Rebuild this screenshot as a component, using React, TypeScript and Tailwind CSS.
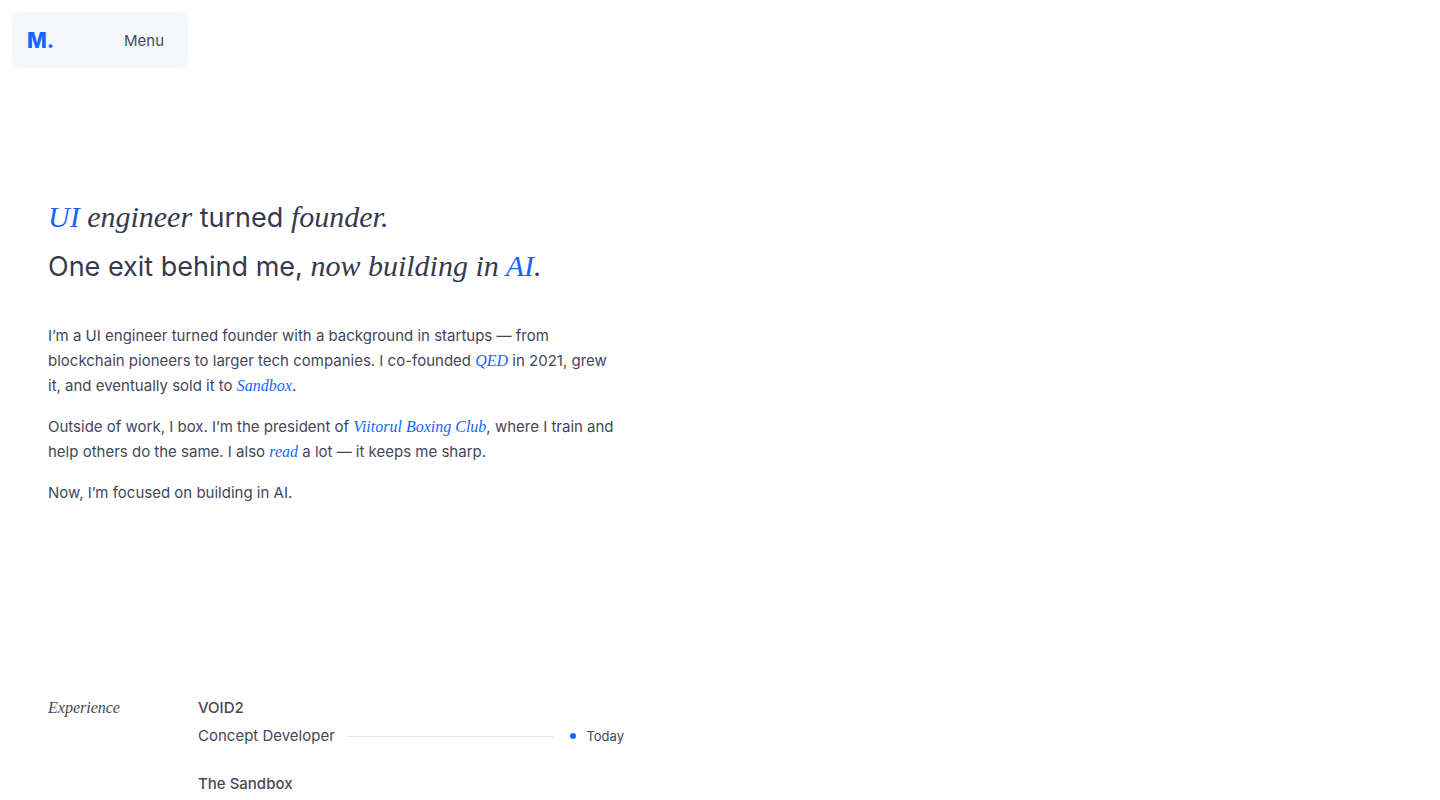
import { ReactNode } from 'react';

interface Job {
  company: string;
  role?: string;
  period?: string;
}

const jobs: Job[] = [
  { company: 'VOID2', role: 'Concept Developer', period: 'Today' },
  { company: 'The Sandbox' },
];

function Serif({ children }: { children: ReactNode }) {
  return (
    <em className="font-['Liberation_Serif',serif] text-[30px] leading-none italic">{children}</em>
  );
}

function SerifLink({ href, children }: { href: string; children: ReactNode }) {
  return (
    <a
      href={href}
      className="font-['Liberation_Serif',serif] text-base leading-none text-[#1466ff] italic hover:underline"
    >
      {children}
    </a>
  );
}

function Header() {
  return (
    <header className="p-3">
      <div className="flex h-14 w-44 items-center justify-between rounded-lg bg-[#f4f7fa] pt-px pr-3 pl-[15px]">
        <a href="/" className="text-[21px] font-extrabold text-[#1466ff]">
          M.
        </a>
        <button type="button" className="px-3 py-2">
          Menu
        </button>
      </div>
    </header>
  );
}

function JobItem({ job }: { job: Job }) {
  return (
    <li>
      <h3 className="font-medium">{job.company}</h3>
      {job.role && (
        <div className="mt-1 flex items-center">
          <p>{job.role}</p>
          <span className="mr-4 ml-3 h-px flex-1 bg-[#e8e8ea]" />
          <span className="mr-2.5 size-1.5 rounded-full bg-[#1466ff]" />
          <span className="text-[13px]">{job.period}</span>
        </div>
      )}
    </li>
  );
}

export default function App() {
  return (
    <div className="min-h-screen bg-white font-[Inter,sans-serif] text-[15px] leading-6 text-[#44475a]">
      <Header />
      <main className="max-w-2xl px-12 pt-[113px]">
        <h1 className="text-[27px] leading-[49px] text-[#363a50]">
          <span className="block">
            <Serif>
              <span className="text-[#1466ff]">UI</span> engineer
            </Serif>{' '}
            turned <Serif>founder.</Serif>
          </span>
          <span className="block">
            One exit behind me,{' '}
            <Serif>
              now building in <span className="text-[#1466ff]">AI</span>.
            </Serif>
          </span>
        </h1>

        <div className="mt-8 flex flex-col gap-4 pr-2 leading-[25px]">
          <p>
            I’m a UI engineer turned founder with a background in startups — from blockchain
            pioneers to larger tech companies. I co-founded <SerifLink href="#qed">QED</SerifLink>{' '}
            in 2021, grew it, and eventually sold it to{' '}
            <SerifLink href="#sandbox">Sandbox</SerifLink>.
          </p>
          <p>
            Outside of work, I box. I’m the president of{' '}
            <SerifLink href="#club">Viitorul Boxing Club</SerifLink>, where I train and help others
            do the same. I also <SerifLink href="#books">read</SerifLink> a lot — it keeps me
            sharp.
          </p>
          <p>Now, I’m focused on building in AI.</p>
        </div>

        <section className="mt-[191px] flex">
          <h2 className="w-[150px] shrink-0 font-['Liberation_Serif',serif] text-base italic">
            Experience
          </h2>
          <ul className="flex flex-1 flex-col gap-6">
            {jobs.map((job) => (
              <JobItem key={job.company} job={job} />
            ))}
          </ul>
        </section>
      </main>
    </div>
  );
}
